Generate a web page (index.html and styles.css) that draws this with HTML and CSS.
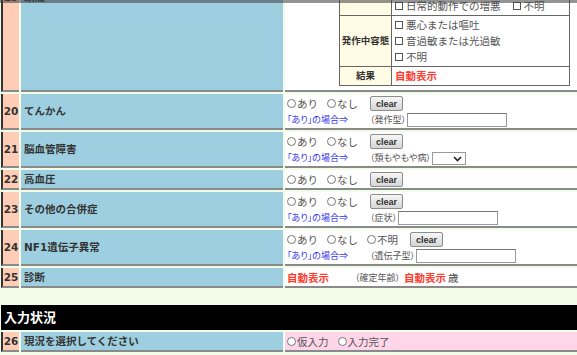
FILE: index.html
```html
<!DOCTYPE html>
<html lang="ja">
<head>
    <meta charset="UTF-8">
    <meta name="viewport" content="width=device-width, initial-scale=1.0">
    <title>調査票入力</title>
    <link rel="stylesheet" href="styles.css">
</head>
<body>
    <div class="top-shade"></div>

    <table class="form main">
        <tr>
            <td class="no">19</td>
            <td class="item">頭痛</td>
            <td class="val">
                <div class="line">
                    <label class="rd"><input type="radio" name="q19">あり</label>
                    <label class="rd"><input type="radio" name="q19">なし</label>
                    <button type="button" class="clr">clear</button>
                </div>
                <div class="line line2"><span class="cond">「あり」の場合<span class="arw">⇒</span></span></div>
                <table class="sub">
                    <tr>
                        <th>頻度</th>
                        <td>
                            <div class="sl">
                                <label class="ck"><input type="checkbox">月1回以上</label>
                                <label class="ck"><input type="checkbox">不明</label>
                            </div>
                        </td>
                    </tr>
                    <tr>
                        <th>性状</th>
                        <td>
                            <div class="sl">
                                <label class="ck"><input type="checkbox">片側性</label>
                                <label class="ck"><input type="checkbox">拍動性</label>
                            </div>
                            <div class="sl">
                                <label class="ck"><input type="checkbox">中等度～重度の痛み</label>
                            </div>
                            <div class="sl">
                                <label class="ck"><input type="checkbox">日常的動作での増悪</label>
                                <label class="ck"><input type="checkbox">不明</label>
                            </div>
                        </td>
                    </tr>
                    <tr>
                        <th>発作中容態</th>
                        <td>
                            <div class="sl"><label class="ck"><input type="checkbox">悪心または嘔吐</label></div>
                            <div class="sl"><label class="ck"><input type="checkbox">音過敏または光過敏</label></div>
                            <div class="sl"><label class="ck"><input type="checkbox">不明</label></div>
                        </td>
                    </tr>
                    <tr class="result">
                        <th>結果</th>
                        <td><span class="auto">自動表示</span></td>
                    </tr>
                </table>
            </td>
        </tr>
        <tr>
            <td class="no">20</td>
            <td class="item">てんかん</td>
            <td class="val">
                <div class="line">
                    <label class="rd"><input type="radio" name="q20">あり</label>
                    <label class="rd"><input type="radio" name="q20">なし</label>
                    <button type="button" class="clr">clear</button>
                </div>
                <div class="line line2">
                    <span class="cond">「あり」の場合<span class="arw">⇒</span></span>
                    <span class="note">（発作型）</span>
                    <input type="text" class="txt">
                </div>
            </td>
        </tr>
        <tr>
            <td class="no">21</td>
            <td class="item">脳血管障害</td>
            <td class="val">
                <div class="line">
                    <label class="rd"><input type="radio" name="q21">あり</label>
                    <label class="rd"><input type="radio" name="q21">なし</label>
                    <button type="button" class="clr">clear</button>
                </div>
                <div class="line line2">
                    <span class="cond">「あり」の場合<span class="arw">⇒</span></span>
                    <span class="note">（類もやもや病）</span>
                    <span class="sel">
                        <select><option></option><option>あり</option><option>なし</option></select>
                        <svg class="chev" width="9" height="6" viewBox="0 0 9 6"><path d="M1 1 L4.5 4.5 L8 1" fill="none" stroke="#222" stroke-width="1.6"/></svg>
                    </span>
                </div>
            </td>
        </tr>
        <tr>
            <td class="no">22</td>
            <td class="item">高血圧</td>
            <td class="val">
                <div class="line">
                    <label class="rd"><input type="radio" name="q22">あり</label>
                    <label class="rd"><input type="radio" name="q22">なし</label>
                    <button type="button" class="clr">clear</button>
                </div>
            </td>
        </tr>
        <tr>
            <td class="no">23</td>
            <td class="item">その他の合併症</td>
            <td class="val">
                <div class="line">
                    <label class="rd"><input type="radio" name="q23">あり</label>
                    <label class="rd"><input type="radio" name="q23">なし</label>
                    <button type="button" class="clr">clear</button>
                </div>
                <div class="line line2">
                    <span class="cond">「あり」の場合<span class="arw">⇒</span></span>
                    <span class="note">（症状）</span>
                    <input type="text" class="txt">
                </div>
            </td>
        </tr>
        <tr>
            <td class="no">24</td>
            <td class="item">NF1遺伝子異常</td>
            <td class="val">
                <div class="line">
                    <label class="rd"><input type="radio" name="q24">あり</label>
                    <label class="rd"><input type="radio" name="q24">なし</label>
                    <label class="rd"><input type="radio" name="q24">不明</label>
                    <button type="button" class="clr">clear</button>
                </div>
                <div class="line line2">
                    <span class="cond">「あり」の場合<span class="arw">⇒</span></span>
                    <span class="note">（遺伝子型）</span>
                    <input type="text" class="txt">
                </div>
            </td>
        </tr>
        <tr>
            <td class="no">25</td>
            <td class="item">診断</td>
            <td class="val">
                <div class="line">
                    <span class="auto">自動表示</span>
                    <span class="note age">（確定年齢）</span>
                    <span class="auto">自動表示</span>
                    <span class="unit">歳</span>
                </div>
            </td>
        </tr>
    </table>

    <div class="section">入力状況</div>

    <table class="form">
        <tr>
            <td class="no">26</td>
            <td class="item">現況を選択してください</td>
            <td class="val status">
                <div class="line">
                    <label class="rd"><input type="radio" name="q26">仮入力</label>
                    <label class="rd"><input type="radio" name="q26">入力完了</label>
                </div>
            </td>
        </tr>
    </table>
</body>
</html>
```

FILE: styles.css
```css
html, body {
    margin: 0;
    padding: 0;
    overflow: hidden;
}

body {
    background: #f2fde9;
    font-family: "DejaVu Sans", "Noto Sans CJK JP", sans-serif;
    font-size: 10.5px;
    line-height: 14px;
    color: #555;
}

.top-shade {
    position: fixed;
    top: 0;
    left: 0;
    right: 0;
    height: 3px;
    background: rgba(60, 60, 60, 0.55);
}

/* main form table */
.form {
    border-collapse: separate;
    border-spacing: 2px;
    margin-left: -1px;
    width: 586px;
    table-layout: fixed;
}

.main {
    margin-top: -98px;
}

.form > tbody > tr > td {
    box-sizing: border-box;
    padding: 0;
    border-bottom: 2px solid #8a8a8a;
}

.form .no {
    width: 18px;
    background: #ffcdb6;
    border-left: 2px solid #333;
    text-align: center;
    font-weight: bold;
    color: #333;
    vertical-align: middle;
}

.form .item {
    width: 262px;
    background: #9dcfe0;
    padding-left: 3px;
    font-weight: bold;
    color: #333;
    vertical-align: middle;
}

.form .val {
    background: #fff;
    vertical-align: top;
    padding: 1px 2px 0;
}

.form .status {
    background: #ffd6e9;
}

.line {
    display: flex;
    align-items: center;
    height: 17px;
    white-space: nowrap;
}

.line2 {
    height: 16px;
}

.rd {
    display: inline-flex;
    align-items: center;
    margin-right: 9px;
}

.rd input {
    appearance: none;
    box-sizing: border-box;
    width: 9px;
    height: 9px;
    margin: 0 1px 0 0;
    border: 1px solid #777;
    border-radius: 50%;
    background: #fff;
}

.clr {
    box-sizing: border-box;
    width: 33px;
    height: 15px;
    margin-left: 3px;
    padding: 0;
    font-family: "Liberation Sans", sans-serif;
    font-size: 9px;
    font-weight: bold;
    color: #333;
    background: linear-gradient(#f6f6f6, #d6d6d6);
    border: 1px solid #8c8c8c;
    border-radius: 2px;
}

.cond {
    width: 83px;
    font-size: 9px;
    color: #3333ee;
    font-feature-settings: "palt";
}

.arw {
    font-family: "Noto Sans CJK JP", sans-serif;
}

.note {
    font-size: 9px;
    color: #555;
    margin-right: 1px;
    font-feature-settings: "palt";
}

.txt {
    box-sizing: border-box;
    width: 100px;
    height: 14px;
    margin: 0;
    padding: 0 2px;
    border: 1px solid #999;
    border-top-color: #777;
    background: #fff;
}

.sel {
    position: relative;
    display: inline-block;
    height: 13px;
}

.sel select {
    appearance: none;
    box-sizing: border-box;
    width: 34px;
    height: 13px;
    margin: 0;
    border: 1px solid #999;
    background: #fff;
}

.sel .chev {
    position: absolute;
    right: 4px;
    top: 4px;
}

.auto {
    color: #ff3b30;
    font-weight: bold;
}

.age {
    margin-left: 26px;
    margin-right: 4px;
}

.unit {
    margin-left: 2px;
    color: #444;
}

/* nested detail table */
.sub {
    border-collapse: collapse;
    width: 231px;
    margin: 7px 0 4px 52px;
    border: 1px solid #666;
}

.sub th,
.sub td {
    border: 1px solid #666;
}

.sub th {
    width: 51px;
    padding: 0;
    background: #fffbe4;
    font-size: 9.5px;
    font-weight: bold;
    color: #333;
    text-align: center;
}

.sub td {
    padding: 1px 3px;
    background: #fff;
}

.sub .result td {
    padding: 2px 3px;
}

.sl {
    display: flex;
    align-items: center;
    height: 16px;
    white-space: nowrap;
}

.ck {
    display: inline-flex;
    align-items: center;
    margin-right: 12px;
}

.ck input {
    appearance: none;
    box-sizing: border-box;
    width: 8px;
    height: 8px;
    margin: 0 3px 0 0;
    border: 1px solid #555;
    background: #fff;
}

.section {
    margin: 15px 0 0 1px;
    padding-left: 3px;
    height: 25px;
    line-height: 25px;
    background: #000;
    color: #fff;
    font-size: 13px;
    font-weight: bold;
}
```
